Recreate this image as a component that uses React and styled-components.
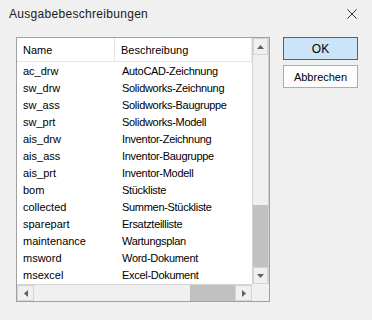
import React from 'react';
import styled, { createGlobalStyle } from 'styled-components';

// ----- data -----

const rows = [
    ['ac_drw', 'AutoCAD-Zeichnung'],
    ['sw_drw', 'Solidworks-Zeichnung'],
    ['sw_ass', 'Solidworks-Baugruppe'],
    ['sw_prt', 'Solidworks-Modell'],
    ['ais_drw', 'Inventor-Zeichnung'],
    ['ais_ass', 'Inventor-Baugruppe'],
    ['ais_prt', 'Inventor-Modell'],
    ['bom', 'Stückliste'],
    ['collected', 'Summen-Stückliste'],
    ['sparepart', 'Ersatzteilliste'],
    ['maintenance', 'Wartungsplan'],
    ['msword', 'Word-Dokument'],
    ['msexcel', 'Excel-Dokument'],
]

// ----- style -----

const Global = createGlobalStyle`
    body {
        margin: 0;
        background: #f0f0f0;
        font-family: "Liberation Sans", Arial, sans-serif;
        font-size: 11px;
        color: #000;
    }
`
const Dialog = styled.div`
    width: 372px;
    height: 320px;
    display: flex;
    flex-direction: column;
    background: #f0f0f0;
`
const TitleBar = styled.div`
    height: 28px;
    display: flex;
    align-items: center;
    justify-content: space-between;
    padding: 0 15px 0 9px;
    font-size: 12px;
    letter-spacing: 0.3px;
    color: #1a1a1a;
`
const Body = styled.div`
    display: flex;
    padding: 9px 14px 0 16px;
`
const Frame = styled.div`
    width: 252px;
    height: 263px;
    border: 1px solid #a0a0a0;
    background: #fff;
    display: grid;
    grid-template-columns: 1fr 17px;
    grid-template-rows: 1fr 17px;
`
const ListArea = styled.div`
    overflow: hidden;
    display: flex;
    flex-direction: column;
`
const Header = styled.div`
    display: grid;
    grid-template-columns: 98px 1fr;
    height: 23px;
    border-bottom: 1px solid #e5e5e5;
    margin-bottom: 1px;
    flex-shrink: 0;
`
const HeadCell = styled.div`
    display: flex;
    align-items: center;
    padding-left: 6px;
    border-right: 1px solid #e5e5e5;
`
const Row = styled.div`
    display: grid;
    grid-template-columns: 98px 1fr;
    height: 17px;
    line-height: 17px;
    flex-shrink: 0;
`
const Cell = styled.div`
    padding-left: ${p => p.$pad}px;
    white-space: nowrap;
    letter-spacing: ${p => p.$tight ? '-0.3px' : '0'};
`
const VScroll = styled.div`
    display: flex;
    flex-direction: column;
    background: #f0f0f0;
    border-left: 1px solid #d4d4d4;
    border-right: 1px solid #d4d4d4;
`
const HScroll = styled.div`
    display: flex;
    background: #f0f0f0;
    border-top: 1px solid #d4d4d4;
`
const ArrowBtn = styled.div`
    width: ${p => p.$horizontal ? '17px' : '100%'};
    height: ${p => p.$horizontal ? '100%' : '17px'};
    flex-shrink: 0;
    display: flex;
    align-items: center;
    justify-content: center;
    box-sizing: border-box;
    border: 1px solid #d4d4d4;
    background: #f0f0f0;
`
const Track = styled.div`
    flex: ${p => p.$size};
`
const Thumb = styled.div`
    background: #c1c1c1;
    flex: 0 0 ${p => p.$size}px;
`
const Corner = styled.div`
    background: #f0f0f0;
`
const Buttons = styled.div`
    display: flex;
    flex-direction: column;
    gap: 5px;
    margin-left: 13px;
`
const Button = styled.div`
    width: 75px;
    height: 23px;
    box-sizing: border-box;
    display: flex;
    align-items: center;
    justify-content: center;
    font-size: ${p => p.$primary ? '12px' : '11px'};
    background: ${p => p.$primary ? '#cce4f7' : '#fdfdfd'};
    border: 1px solid ${p => p.$primary ? '#0078d7' : '#adadad'};
`

// ----- icons -----

const Close = () => (
    <svg width="10" height="10" viewBox="0 0 10 10">
        <path d="M0.5 0.5 L9.5 9.5 M9.5 0.5 L0.5 9.5" stroke="#333" strokeWidth="1" />
    </svg>
)

const arrows = {
    up: 'M0 4 L3.5 0 L7 4 Z',
    down: 'M0 0 L7 0 L3.5 4 Z',
}

const Triangle = ({ dir }) => (
    dir === 'left' || dir === 'right'
        ? <svg width="4" height="7" viewBox="0 0 4 7">
            <path d={dir === 'left' ? 'M4 0 L0 3.5 L4 7 Z' : 'M0 0 L4 3.5 L0 7 Z'} fill="#606060" />
        </svg>
        : <svg width="7" height="4" viewBox="0 0 7 4">
            <path d={arrows[dir]} fill="#606060" />
        </svg>
)

// ----- component -----

const App = () => (
    <Dialog>
        <Global />
        <TitleBar>
            <span>Ausgabebeschreibungen</span>
            <Close />
        </TitleBar>
        <Body>
            <Frame>
                <ListArea>
                    <Header>
                        <HeadCell>Name</HeadCell>
                        <HeadCell>Beschreibung</HeadCell>
                    </Header>
                    {rows.map(([name, desc]) => (
                        <Row key={name}>
                            <Cell $pad={6}>{name}</Cell>
                            <Cell $pad={7} $tight>{desc}</Cell>
                        </Row>
                    ))}
                </ListArea>
                <VScroll>
                    <ArrowBtn><Triangle dir="up" /></ArrowBtn>
                    <Track $size={1} />
                    <Thumb $size={62} />
                    <ArrowBtn><Triangle dir="down" /></ArrowBtn>
                </VScroll>
                <HScroll>
                    <ArrowBtn $horizontal><Triangle dir="left" /></ArrowBtn>
                    <Track $size={1} />
                    <Thumb $size={45} />
                    <ArrowBtn $horizontal><Triangle dir="right" /></ArrowBtn>
                </HScroll>
                <Corner />
            </Frame>
            <Buttons>
                <Button $primary>OK</Button>
                <Button>Abbrechen</Button>
            </Buttons>
        </Body>
    </Dialog>
)

export default App;
